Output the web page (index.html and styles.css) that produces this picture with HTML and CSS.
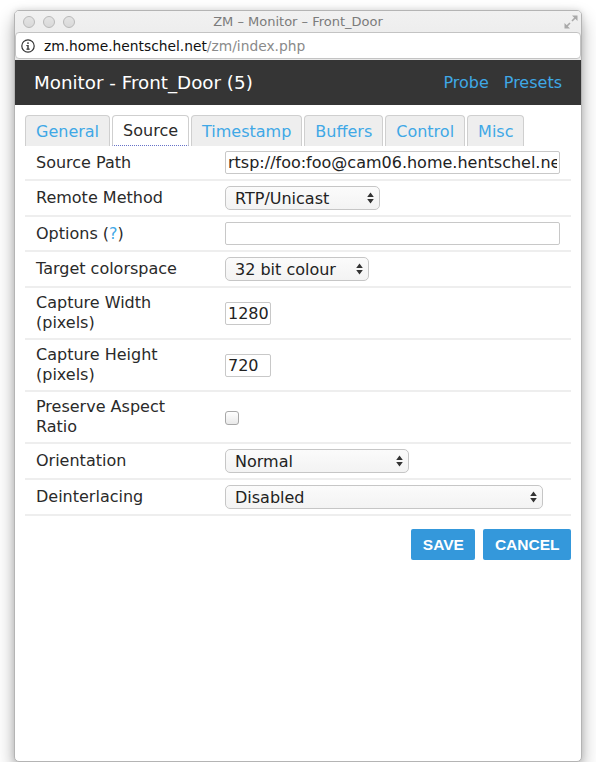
FILE: index.html
```html
<!DOCTYPE html>
<html lang="en">
<head>
<meta charset="utf-8">
<title>ZM – Monitor – Front_Door</title>
<link rel="stylesheet" href="styles.css">
</head>
<body>
<div class="window">
  <div class="chrome">
    <div class="titlebar">
      <div class="lights">
        <span class="light"></span><span class="light"></span><span class="light"></span>
      </div>
      <div class="wintitle">ZM – Monitor – Front_Door</div>
      <svg class="resize" width="14" height="14" viewBox="0 0 14 14">
        <path d="M8 0.5H13.5V6Z M0.5 8V13.5H6Z" fill="#a9a9a9"/>
        <path d="M11.5 2.5L8 6 M2.5 11.5L6 8" stroke="#a9a9a9" stroke-width="1.6"/>
      </svg>
    </div>
    <div class="urlbar">
      <svg class="info" width="14" height="14" viewBox="0 0 14 14">
        <circle cx="7" cy="7" r="6.2" fill="none" stroke="#333" stroke-width="1.2"/>
        <rect x="6.3" y="6" width="1.4" height="4.6" fill="#333"/>
        <rect x="5.4" y="6" width="1.4" height="1.1" fill="#333"/>
        <rect x="5.4" y="9.6" width="3.4" height="1.1" fill="#333"/>
        <circle cx="7" cy="4.1" r="0.9" fill="#333"/>
      </svg>
      <span class="host">zm.home.hentschel.net</span><span class="path">/zm/index.php</span>
    </div>
  </div>
  <div class="page">
    <div class="topbar">
      <h1 class="heading">Monitor - Front_Door (5)</h1>
      <nav class="actions">
        <a href="#" class="link">Probe</a>
        <a href="#" class="link">Presets</a>
      </nav>
    </div>
    <div class="content">
      <ul class="tabs">
        <li class="tab"><a href="#" class="tablink">General</a></li>
        <li class="tab active"><a href="#" class="tablink">Source</a></li>
        <li class="tab"><a href="#" class="tablink">Timestamp</a></li>
        <li class="tab"><a href="#" class="tablink">Buffers</a></li>
        <li class="tab"><a href="#" class="tablink">Control</a></li>
        <li class="tab"><a href="#" class="tablink">Misc</a></li>
      </ul>
      <div class="form">
        <div class="row">
          <div class="label">Source Path</div>
          <div class="value"><input class="text wide" type="text" value="rtsp://foo:foo@cam06.home.hentschel.net:554/live"></div>
        </div>
        <div class="row">
          <div class="label">Remote Method</div>
          <div class="value"><span class="selectwrap w-method"><select class="select"><option>RTP/Unicast</option></select><svg class="arrows" width="7" height="12" viewBox="0 0 7 12"><path d="M3.5 0.5L6.8 5H0.2Z M3.5 11.5L6.8 7H0.2Z" fill="#333"/></svg></span></div>
        </div>
        <div class="row">
          <div class="label">Options (<a href="#" class="link">?</a>)</div>
          <div class="value"><input class="text wide" type="text" value=""></div>
        </div>
        <div class="row">
          <div class="label">Target colorspace</div>
          <div class="value"><span class="selectwrap w-colour"><select class="select"><option>32 bit colour</option></select><svg class="arrows" width="7" height="12" viewBox="0 0 7 12"><path d="M3.5 0.5L6.8 5H0.2Z M3.5 11.5L6.8 7H0.2Z" fill="#333"/></svg></span></div>
        </div>
        <div class="row">
          <div class="label">Capture Width<br>(pixels)</div>
          <div class="value"><input class="text small" type="text" value="1280"></div>
        </div>
        <div class="row">
          <div class="label">Capture Height<br>(pixels)</div>
          <div class="value"><input class="text small" type="text" value="720"></div>
        </div>
        <div class="row">
          <div class="label">Preserve Aspect<br>Ratio</div>
          <div class="value"><input class="check" type="checkbox"></div>
        </div>
        <div class="row">
          <div class="label">Orientation</div>
          <div class="value"><span class="selectwrap w-orient"><select class="select"><option>Normal</option></select><svg class="arrows" width="7" height="12" viewBox="0 0 7 12"><path d="M3.5 0.5L6.8 5H0.2Z M3.5 11.5L6.8 7H0.2Z" fill="#333"/></svg></span></div>
        </div>
        <div class="row">
          <div class="label">Deinterlacing</div>
          <div class="value"><span class="selectwrap w-deint"><select class="select"><option>Disabled</option></select><svg class="arrows" width="7" height="12" viewBox="0 0 7 12"><path d="M3.5 0.5L6.8 5H0.2Z M3.5 11.5L6.8 7H0.2Z" fill="#333"/></svg></span></div>
        </div>
      </div>
      <div class="buttons">
        <button class="btn" type="button">SAVE</button>
        <button class="btn" type="button">CANCEL</button>
      </div>
    </div>
  </div>
</div>
</body>
</html>
```
FILE: styles.css
```css
html, body {
  margin: 0;
  padding: 0;
  background: #ffffff;
}
body {
  font-family: "DejaVu Sans", Verdana, sans-serif;
  color: #2a2a2a;
}
.window {
  margin: 10px 0 0 14px;
  width: 568px;
  height: 752px;
  box-sizing: border-box;
  border: 1px solid #b4b4b4;
  border-radius: 5px;
  box-shadow: 0 9px 18px rgba(0, 0, 0, 0.32), 0 0 6px rgba(0, 0, 0, 0.12);
  overflow: hidden;
  display: flex;
  flex-direction: column;
  background: #fff;
}
.chrome {
  background: linear-gradient(#f1f1f1, #e9e9e9);
  padding-bottom: 1px;
}
.titlebar {
  height: 21px;
  display: grid;
  grid-template-columns: 1fr auto 1fr;
  align-items: center;
}
.lights {
  display: flex;
  gap: 8px;
  padding-left: 8px;
  justify-self: start;
}
.light {
  width: 10px;
  height: 10px;
  border-radius: 50%;
  border: 1px solid #b9b9b9;
  background: linear-gradient(#e4e4e4, #d9d9d9);
}
.wintitle {
  font-size: 13px;
  color: #7b7b7b;
  line-height: 21px;
}
.resize {
  justify-self: end;
  margin-right: 3px;
}
.urlbar {
  height: 27px;
  box-sizing: border-box;
  border: 1px solid #c3c3c3;
  border-radius: 4px;
  background: #fff;
  display: flex;
  align-items: center;
  padding-left: 5px;
  font-size: 13.8px;
}
.info {
  margin-right: 9px;
}
.host {
  color: #111;
}
.path {
  color: #8a8a8a;
}
.page {
  flex: 1;
  display: flex;
  flex-direction: column;
}
.topbar {
  height: 45px;
  background: #353535;
  display: flex;
  align-items: center;
  justify-content: space-between;
  padding: 0 19px;
}
.heading {
  margin: 0;
  font-size: 18.3px;
  font-weight: normal;
  color: #ffffff;
}
.actions {
  display: flex;
  gap: 15px;
  font-size: 16px;
}
.link {
  color: #3fa8e6;
  text-decoration: none;
}
.content {
  padding: 10px;
}
.tabs {
  list-style: none;
  margin: 0;
  padding: 0;
  display: flex;
  gap: 2px;
}
.tab {
  height: 31px;
  box-sizing: border-box;
  border: 1px solid #cfcfcf;
  border-bottom: none;
  border-radius: 4px 4px 0 0;
  background: #eeeeee;
  padding: 0 10px;
  display: flex;
  align-items: center;
  font-size: 16px;
}
.tablink {
  color: #3fa8e6;
  text-decoration: none;
}
.tab.active {
  background: #ffffff;
  border-bottom: 1px dotted #6672c8;
}
.tab.active .tablink {
  color: #2a2a2a;
}
.form {
  font-size: 16px;
}
.row {
  display: grid;
  grid-template-columns: 200px 1fr;
  align-items: center;
  padding: 5px 0;
  border-bottom: 2px solid #eeeeee;
  line-height: 20px;
}
.label {
  padding-left: 11px;
}
.value {
  display: flex;
  align-items: center;
}
.text {
  height: 23px;
  box-sizing: border-box;
  border: 1px solid #c8c8c8;
  border-radius: 2px;
  padding: 0 2px;
  font-family: "DejaVu Sans", Verdana, sans-serif;
  font-size: 16px;
  color: #222;
  background: #fff;
}
.wide {
  width: 335px;
}
.small {
  width: 46px;
}
.selectwrap {
  position: relative;
  display: inline-block;
  height: 24px;
}
.select {
  appearance: none;
  -webkit-appearance: none;
  width: 100%;
  height: 24px;
  box-sizing: border-box;
  border: 1px solid #c6c6c6;
  border-radius: 5px;
  background: linear-gradient(#fbfbfb, #f3f3f3);
  padding: 0 20px 0 9px;
  font-family: "DejaVu Sans", Verdana, sans-serif;
  font-size: 16px;
  color: #222;
}
.arrows {
  position: absolute;
  right: 6px;
  top: 6px;
  pointer-events: none;
}
.w-method { width: 155px; }
.w-colour { width: 144px; }
.w-orient { width: 184px; }
.w-deint { width: 318px; }
.check {
  appearance: none;
  -webkit-appearance: none;
  margin: 1px 0 0 0;
  width: 14px;
  height: 14px;
  box-sizing: border-box;
  border: 1px solid #a8a8a8;
  border-radius: 3px;
  background: linear-gradient(#ffffff, #e9e9e9);
}
.buttons {
  display: flex;
  justify-content: flex-end;
  gap: 8px;
  margin-top: 13px;
}
.btn {
  height: 31px;
  border: none;
  border-radius: 2px;
  background: #3498db;
  color: #ffffff;
  font-family: "Liberation Sans", Arial, sans-serif;
  font-weight: bold;
  font-size: 15.5px;
  padding: 0 11.5px;
}
```
